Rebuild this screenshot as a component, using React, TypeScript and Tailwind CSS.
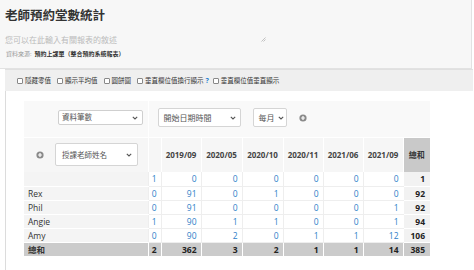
import React from "react";

const Chevron = () => (
  <svg width="6" height="4" viewBox="0 0 6 4" className="shrink-0">
    <path d="M0.8 0.8 L3 3 L5.2 0.8" fill="none" stroke="#555" strokeWidth="1.1" />
  </svg>
);

const PlusCircle = () => (
  <svg width="8" height="8" viewBox="0 0 8 8" className="shrink-0">
    <circle cx="4" cy="4" r="3.6" fill="#8a8a8a" />
    <path d="M4 2.1 V5.9 M2.1 4 H5.9" stroke="#fff" strokeWidth="1.2" />
  </svg>
);

const Check = ({ label }: { label: string }) => (
  <div className="flex items-center gap-[2px]">
    <span className="w-[6px] h-[6px] border border-[#888] bg-white rounded-[1px]" />
    <span className="text-[6.5px] leading-[8px] text-[#333]">{label}</span>
  </div>
);

const cols = [124, 13, 40, 41, 41, 40, 40, 40, 27];
const headers = ["", "2019/09", "2020/05", "2020/10", "2020/11", "2021/06", "2021/09"];
const rows: { name: string; v: number[]; t: number }[] = [
  { name: "", v: [1, 0, 0, 0, 0, 0, 0], t: 1 },
  { name: "Rex", v: [0, 91, 0, 1, 0, 0, 0], t: 92 },
  { name: "Phil", v: [0, 91, 0, 0, 0, 0, 1], t: 92 },
  { name: "Angie", v: [1, 90, 1, 1, 0, 0, 1], t: 94 },
  { name: "Amy", v: [0, 90, 2, 0, 1, 1, 12], t: 106 },
];
const totals = [2, 362, 3, 2, 1, 1, 14];

export default function App() {
  return (
    <div className="w-[474px] h-[270px] overflow-hidden bg-white font-['Open_Sans','Noto_Sans_CJK_TC',sans-serif]">
      {/* header */}
      <div className="w-[472px] h-[69px] bg-[#f7f7f7] border-b border-r border-[#e2e2e2] pl-[5px] pt-[8px]">
        <div className="text-[12.5px] leading-[16px] font-bold text-[#333]">老師預約堂數統計</div>
        <div className="relative w-[262px] h-[10px] mt-[11px] text-[8px] leading-[10px] text-[#bbb]">
          您可以在此輸入有關報表的敘述
          <svg width="5" height="5" viewBox="0 0 5 5" className="absolute right-[1px] top-[2px]">
            <path d="M4.5 0.5 L0.5 4.5 M4.5 2.5 L2.5 4.5" stroke="#aaa" strokeWidth="0.7" />
          </svg>
        </div>
        <div className="mt-[5px] pl-[1px] text-[6px] leading-[8px] flex gap-[3px]">
          <span className="text-[#999]">資料來源:</span>
          <span className="text-[#333] font-bold">預約上課單（整合預約系統報表）</span>
        </div>
      </div>

      {/* toolbar */}
      <div className="ml-[5px] w-[468px] h-[22px] bg-[#efefef] border-t border-[#e0e0e0] flex items-center pl-[12px] gap-[6px]">
        <Check label="隱藏零值" />
        <Check label="顯示平均值" />
        <Check label="圓餅圖" />
        <div className="flex items-center gap-[2px] mr-[-2px]">
          <Check label="垂直欄位值換行顯示" />
          <span className="text-[7px] leading-[8px] font-bold text-[#2a7fd0]">?</span>
        </div>
        <Check label="垂直欄位值垂直顯示" />
      </div>

      {/* panel */}
      <div className="ml-[5px] h-[179px] border-l border-[#dcdcdc] pl-[18px] pt-[10px]">
        <table className="table-fixed border-collapse w-[406px]">
          <colgroup>
            {cols.map((w, i) => (
              <col key={i} style={{ width: w }} />
            ))}
          </colgroup>
          <tbody>
            <tr className="h-[36px] bg-[#f9f9f9]">
              <td className="p-0 align-top border-r border-white">
                <div className="ml-[34px] mt-[9px] w-[85px] h-[15px] bg-white border border-[#cfcfcf] rounded-[2px] flex items-center justify-between pl-[3px] pr-[4px]">
                  <span className="text-[7.5px] leading-[9px] text-[#555]">資料筆數</span>
                  <Chevron />
                </div>
              </td>
              <td colSpan={8} className="p-0 align-top">
                <div className="flex items-center mt-[7px] ml-[9px]">
                  <div className="w-[83px] h-[19px] bg-white border border-[#d5d5d5] rounded-[2px] flex items-center justify-between pl-[5px] pr-[4px]">
                    <span className="text-[8px] leading-[10px] text-[#555]">開始日期時間</span>
                    <Chevron />
                  </div>
                  <div className="ml-[12px] w-[34px] h-[19px] bg-white border border-[#d5d5d5] rounded-[2px] flex items-center pl-[5px] gap-[3px]">
                    <span className="text-[8px] leading-[10px] text-[#555]">每月</span>
                    <Chevron />
                  </div>
                  <div className="ml-[12px]">
                    <PlusCircle />
                  </div>
                </div>
              </td>
            </tr>
            <tr className="h-[35px] bg-[#f6f6f6] border-t border-white">
              <td className="p-0 border-r border-white">
                <div className="flex items-center">
                  <div className="ml-[12px]">
                    <PlusCircle />
                  </div>
                  <div className="ml-[11px] w-[83px] h-[23px] bg-white border border-[#d5d5d5] rounded-[2px] flex items-center justify-between pl-[6px] pr-[5px]">
                    <span className="text-[7.5px] leading-[10px] text-[#555]">授課老師姓名</span>
                    <Chevron />
                  </div>
                </div>
              </td>
              {headers.map((h, i) => (
                <td key={i} className="p-0 text-center border-r border-white text-[8px] leading-[10px] font-bold text-[#444]">
                  {h}
                </td>
              ))}
              <td className="p-0 text-center bg-[#c9c9c9] text-[8px] leading-[10px] font-bold text-[#333]">總和</td>
            </tr>
            {rows.map((r, ri) => (
              <tr key={ri} className="h-[14px]">
                <td className="p-0 pl-[4px] bg-[#f4f4f4] border-b border-white text-[8.5px] leading-[13px] font-medium text-[#333]">
                  {r.name}
                </td>
                {r.v.map((v, i) => (
                  <td key={i} className="p-0 pr-[4px] text-right bg-white border-l border-b border-[#eeeeee] text-[8.5px] leading-[13px] text-[#2f80c8]">
                    {v}
                  </td>
                ))}
                <td className="p-0 pr-[5px] text-right bg-[#f2f2f2] border-l border-b border-white text-[8.5px] leading-[13px] font-bold text-[#222]">
                  {r.t}
                </td>
              </tr>
            ))}
            <tr className="h-[14px] bg-[#cbcbcb]">
              <td className="p-0 pl-[4px] border-r border-white text-[8.5px] leading-[13px] font-bold text-[#333]">總和</td>
              {totals.map((v, i) => (
                <td key={i} className="p-0 pr-[4px] text-right border-r border-white text-[8.5px] leading-[13px] font-bold text-[#222]">
                  {v}
                </td>
              ))}
              <td className="p-0 pr-[5px] text-right text-[8.5px] leading-[13px] font-bold text-[#222]">385</td>
            </tr>
          </tbody>
        </table>
      </div>
    </div>
  );
}
